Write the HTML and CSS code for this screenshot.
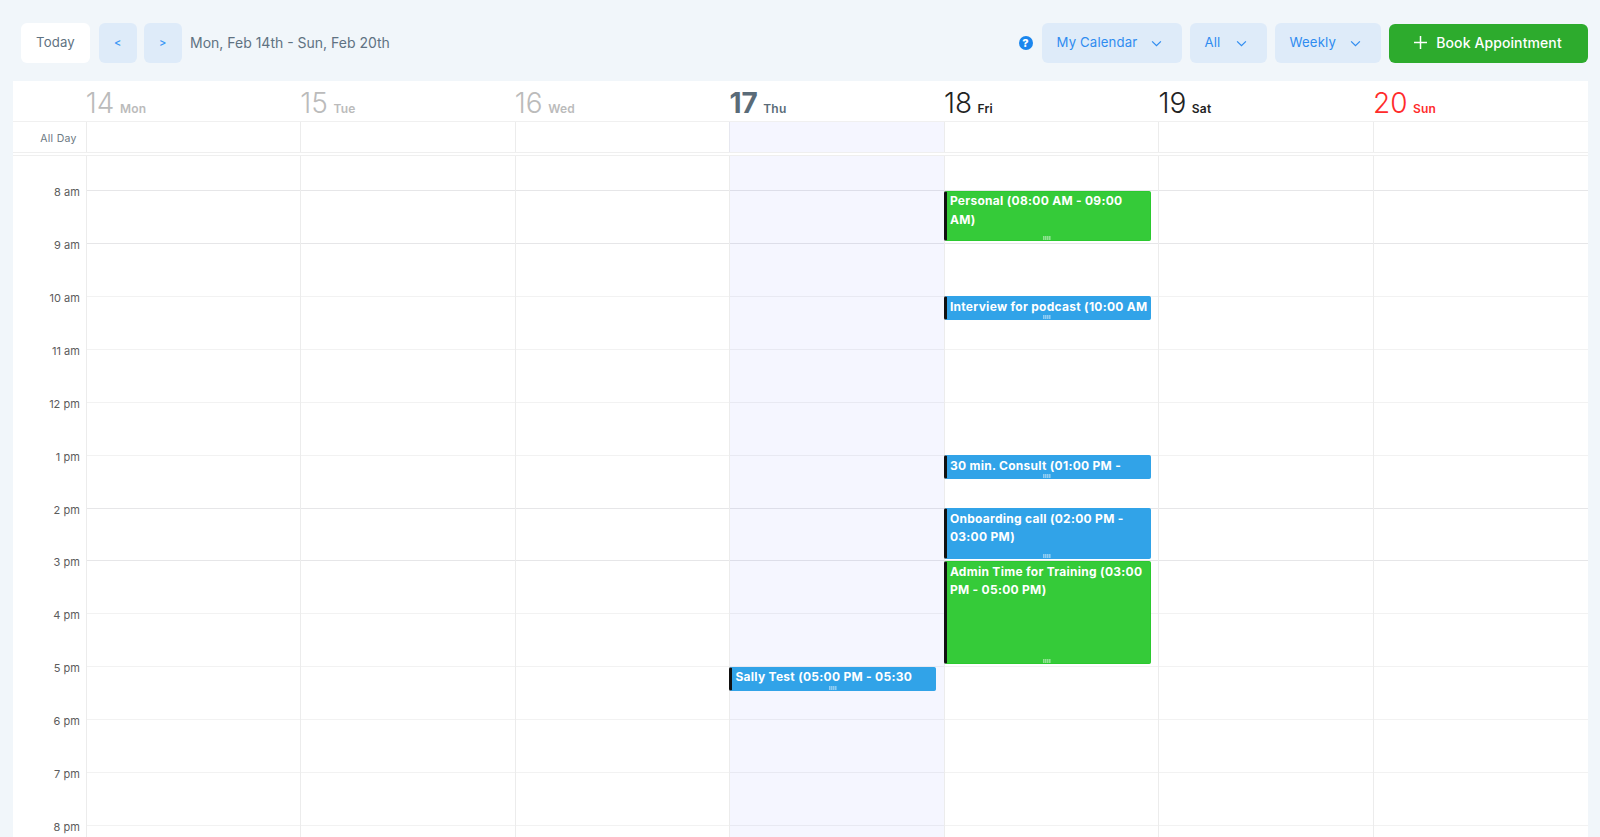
FILE: index.html
```html
<!DOCTYPE html>
<html lang="en">
<head>
  <meta charset="UTF-8">
  <meta name="viewport" content="width=device-width, initial-scale=1.0">
  <title>Calendar</title>
  <link rel="stylesheet" href="styles.css">
</head>
<body>
  <header class="toolbar">
    <button class="btn btn-today">Today</button>
    <button class="btn btn-nav">&lt;</button>
    <button class="btn btn-nav">&gt;</button>
    <span class="date-range">Mon, Feb 14th - Sun, Feb 20th</span>

    <div class="toolbar-right">
      <span class="help">?</span>
      <button class="btn btn-select btn-calendar">My Calendar
        <svg class="chevron" viewBox="0 0 12 8"><path d="M1 1.5l5 5 5-5"/></svg>
      </button>
      <button class="btn btn-select btn-all">All
        <svg class="chevron" viewBox="0 0 12 8"><path d="M1 1.5l5 5 5-5"/></svg>
      </button>
      <button class="btn btn-select btn-weekly">Weekly
        <svg class="chevron" viewBox="0 0 12 8"><path d="M1 1.5l5 5 5-5"/></svg>
      </button>
      <button class="btn btn-book">
        <svg class="plus" viewBox="0 0 14 14"><path d="M7 0v14M0 7h14"/></svg>
        Book Appointment
      </button>
    </div>
  </header>

  <main class="calendar">
    <div class="week-head">
      <div></div>
      <div class="day-head past"><span class="day-num">14</span><span class="day-name">Mon</span></div>
      <div class="day-head past"><span class="day-num">15</span><span class="day-name">Tue</span></div>
      <div class="day-head past"><span class="day-num">16</span><span class="day-name">Wed</span></div>
      <div class="day-head today"><span class="day-num">17</span><span class="day-name">Thu</span></div>
      <div class="day-head"><span class="day-num">18</span><span class="day-name">Fri</span></div>
      <div class="day-head"><span class="day-num">19</span><span class="day-name">Sat</span></div>
      <div class="day-head sunday"><span class="day-num">20</span><span class="day-name">Sun</span></div>
    </div>

    <div class="all-day">
      <div class="all-day-label">All Day</div>
      <div class="all-day-cell"></div>
      <div class="all-day-cell"></div>
      <div class="all-day-cell"></div>
      <div class="all-day-cell is-today"></div>
      <div class="all-day-cell"></div>
      <div class="all-day-cell"></div>
      <div class="all-day-cell"></div>
    </div>

    <div class="time-grid">
      <div class="times">
        <div class="time">8 am</div>
        <div class="time">9 am</div>
        <div class="time">10 am</div>
        <div class="time">11 am</div>
        <div class="time">12 pm</div>
        <div class="time">1 pm</div>
        <div class="time">2 pm</div>
        <div class="time">3 pm</div>
        <div class="time">4 pm</div>
        <div class="time">5 pm</div>
        <div class="time">6 pm</div>
        <div class="time">7 pm</div>
        <div class="time">8 pm</div>
      </div>

      <div class="days">
        <div class="lines">
          <div class="line strong"></div>
          <div class="line strong"></div>
          <div class="line"></div>
          <div class="line"></div>
          <div class="line"></div>
          <div class="line"></div>
          <div class="line strong"></div>
          <div class="line strong"></div>
          <div class="line"></div>
          <div class="line"></div>
          <div class="line"></div>
          <div class="line"></div>
          <div class="line"></div>
        </div>

        <div class="day"></div>
        <div class="day"></div>
        <div class="day"></div>
        <div class="day is-today">
          <div class="event blue" style="top: 510.7px; height: 24.5px">Sally Test (05:00 PM - 05:30 PM)<i class="grip"></i></div>
        </div>
        <div class="day">
          <div class="event green" style="top: 34.7px; height: 50.5px">Personal (08:00 AM - 09:00 AM)<i class="grip"></i></div>
          <div class="event blue" style="top: 140px; height: 24.4px">Interview for podcast (10:00 AM - 10:30 AM)<i class="grip"></i></div>
          <div class="event blue" style="top: 299px; height: 24.4px">30 min. Consult (01:00 PM - 01:30 PM)<i class="grip"></i></div>
          <div class="event blue" style="top: 352px; height: 50.7px">Onboarding call (02:00 PM - 03:00 PM)<i class="grip"></i></div>
          <div class="event green" style="top: 405px; height: 103px">Admin Time for Training (03:00 PM - 05:00 PM)<i class="grip"></i></div>
        </div>
        <div class="day"></div>
        <div class="day"></div>
      </div>
    </div>
  </main>
</body>
</html>
```

FILE: styles.css
```css
* {
  margin: 0;
  padding: 0;
  box-sizing: border-box;
  font-family: Inter, 'Noto Sans', sans-serif;
}

body {
  background-color: #f1f6fa;
  height: 100vh;
  overflow: hidden;
  padding: 0 12.5px 0 13px;
}

/* top bar */
.toolbar {
  display: flex;
  align-items: center;
  height: 81px;
  padding: 23px 0 18px 8px;
}

.btn {
  height: 40px;
  border: none;
  border-radius: 6px;
  font-size: 13.2px;
  letter-spacing: 0.15px;
  padding-bottom: 2px;
  cursor: pointer;
}

.btn-today {
  width: 69px;
  background-color: white;
  color: #5f7282;
  margin-right: 9px;
}

.btn-nav {
  width: 37.5px;
  background-color: #deebf9;
  color: #3d97f5;
  font-size: 11px;
  font-weight: 500;
  margin-right: 7.5px;
}

.date-range {
  font-size: 14px;
  color: #5f7282;
  margin: -1px 0 0 1px;
}

.toolbar-right {
  display: flex;
  align-items: center;
  margin-left: auto;
}

.help {
  width: 14px;
  height: 14px;
  border-radius: 50%;
  background-color: #1a86ee;
  color: white;
  font-size: 11px;
  font-weight: 800;
  line-height: 14px;
  text-align: center;
  margin: -1px 9px 0 0;
}

.btn-select {
  display: flex;
  align-items: center;
  justify-content: space-between;
  padding: 0 20px 2px 15px;
  background-color: #deebf9;
  color: #2f8cf0;
  margin-right: 8px;
}

.btn-calendar { width: 140px; }
.btn-all { width: 77px; }
.btn-weekly { width: 106px; }

.chevron {
  width: 11px;
  height: 7px;
  fill: none;
  stroke: #2f8cf0;
  stroke-width: 1.4;
  margin-top: 2px;
}

.btn-book {
  display: flex;
  align-items: center;
  justify-content: center;
  width: 199px;
  height: 39px;
  background-color: #2dab2d;
  color: white;
  font-size: 14px;
  font-weight: 500;
  letter-spacing: 0.1px;
}

.plus {
  width: 13px;
  height: 13px;
  margin-right: 9px;
  fill: none;
  stroke: white;
  stroke-width: 1.6;
}

/* calendar */
.calendar {
  background-color: white;
  height: 756px;
}

.week-head,
.all-day {
  display: grid;
  grid-template-columns: 72.8px repeat(7, 1fr);
}

.week-head {
  height: 41px;
  border-bottom: 1px solid #f0f0f0;
}

.day-head {
  display: flex;
  align-items: baseline;
  color: #222;
  padding-top: 5px;
  line-height: 34px;
}

.day-num {
  font-size: 28px;
  font-weight: 300;
  margin-right: 5.5px;
}

.day-name {
  font-size: 12px;
  font-weight: 600;
  letter-spacing: 0.2px;
}

.past { color: #bbbbbb; }
.today { color: #5a6b78; }
.today .day-num { font-weight: 700; }
.sunday { color: #ff2b2b; }

.all-day {
  height: 31px;
  border-bottom: 1px solid #efefef;
}

.all-day-label {
  font-size: 10.5px;
  letter-spacing: 0.3px;
  color: #6b7882;
  text-align: right;
  padding: 10px 9px 0 0;
}

.all-day-cell {
  border-left: 1px solid #ececec;
}

.is-today {
  background-color: rgba(80, 90, 255, 0.055);
  border-left-color: #e6e7ef;
}

.time-grid {
  display: grid;
  grid-template-columns: 72.8px 1fr;
  height: 683px;
  margin-top: 2px;
  border-top: 1px solid #efefef;
  overflow: hidden;
}

.times {
  padding-top: 26px;
}

.time {
  height: 52.93px;
  font-size: 11px;
  line-height: 20px;
  color: #5c5c5c;
  text-align: right;
  padding-right: 6px;
}

.days {
  position: relative;
  display: grid;
  grid-template-columns: repeat(7, 1fr);
}

/* hour lines sit behind the day columns */
.lines {
  position: absolute;
  top: 34px;
  left: 0;
  right: 0;
}

.line {
  height: 52.93px;
  border-top: 1px solid #f2f2f2;
}

.line.strong {
  border-top-color: #e6e6e8;
}

.day {
  position: relative;
  border-left: 1px solid #ececec;
}

/* events */
.event {
  position: absolute;
  left: -1px;
  width: 206.7px;
  padding: 0.5px 0 0 3px;
  border: 1px solid;
  border-left: 3px solid #111;
  border-radius: 2px;
  color: white;
  font-size: 12px;
  font-weight: 700;
  letter-spacing: 0.28px;
  line-height: 18.6px;
  overflow: hidden;
}

.green {
  background-color: #35cb39;
  border-color: #2bc92f;
  border-left-color: #111;
}

.blue {
  background-color: #31a3e8;
  border-color: #31a3e8;
  border-left-color: #111;
}

.grip {
  position: absolute;
  left: 50%;
  bottom: 0;
  width: 8px;
  height: 4px;
  margin-left: -5px;
  background: repeating-linear-gradient(90deg, rgba(255,255,255,0.45) 0 1px, rgba(255,255,255,0.25) 1px 2px);
}
```
